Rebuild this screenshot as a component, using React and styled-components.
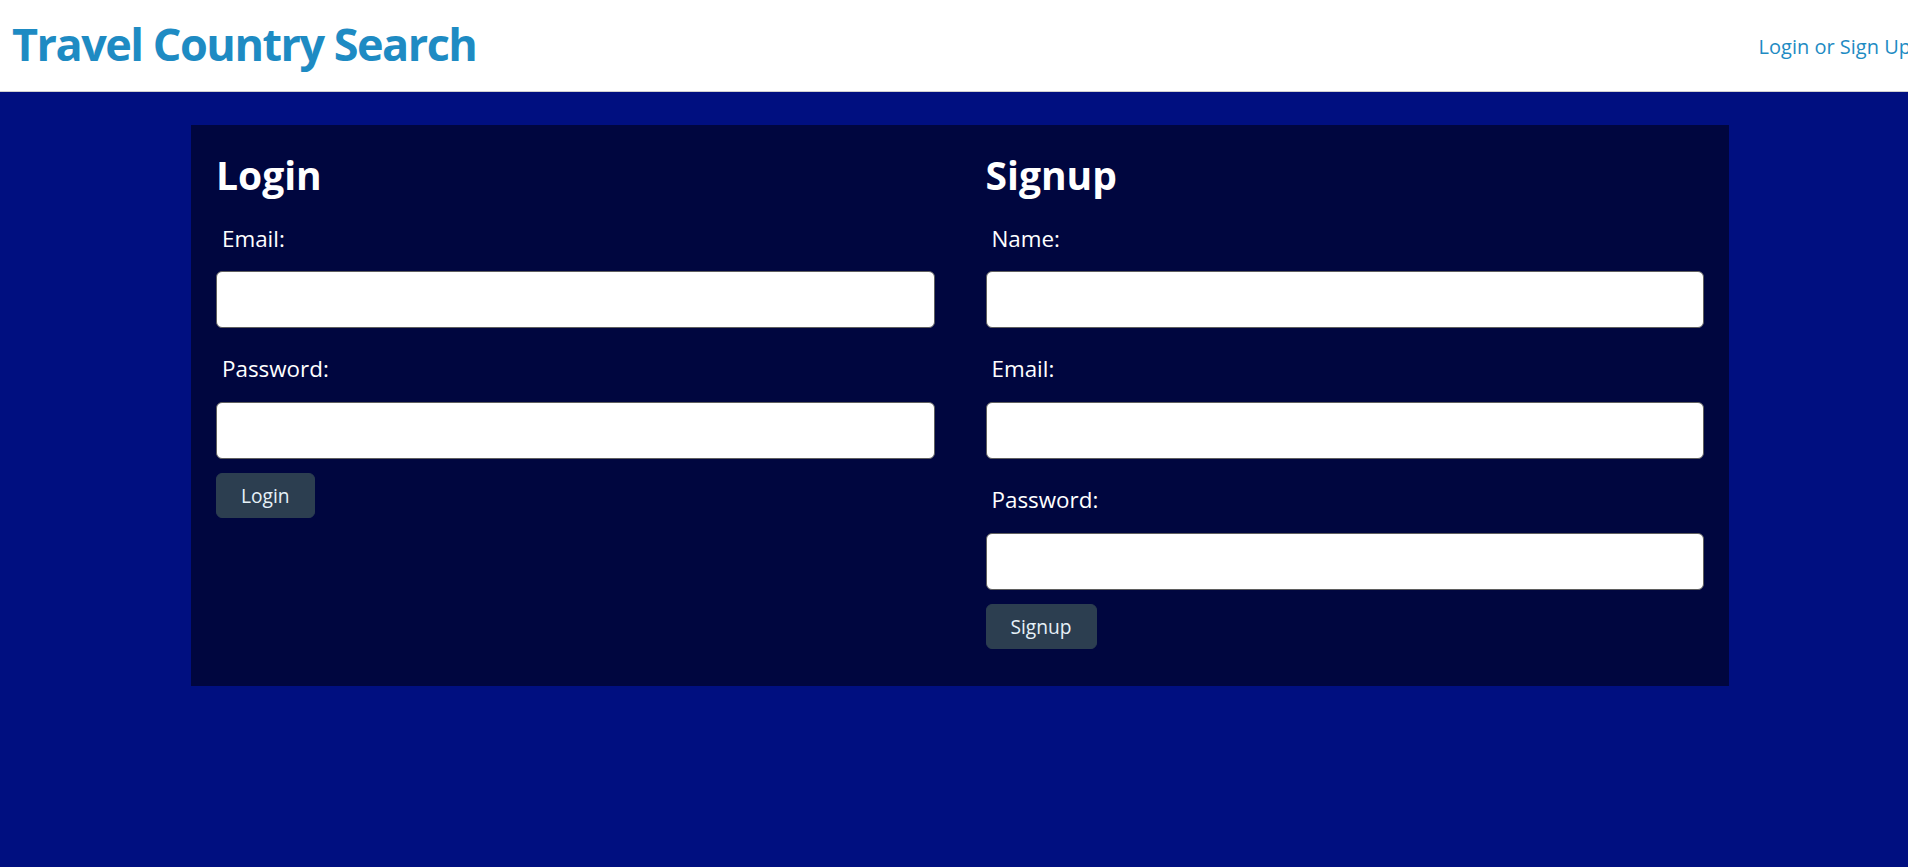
import React from "react";
import styled, { createGlobalStyle } from "styled-components";

const GlobalStyle = createGlobalStyle`
  html, body {
    margin: 0;
    padding: 0;
    background: #000f80;
    font-family: "Segoe UI", "Open Sans", "Noto Sans", sans-serif;
  }
  * { box-sizing: border-box; }
`;

const Page = styled.div`
  min-height: 867px;
  background: #000f80;
`;

const Header = styled.header`
  height: 92px;
  background: #ffffff;
  border-bottom: 1px solid #d0d0d0;
  display: flex;
  align-items: center;
  justify-content: space-between;
  padding-left: 12px;
  overflow: hidden;
`;

const Brand = styled.h1`
  margin: 0;
  font-size: 45px;
  font-weight: 700;
  color: #1e8bc3;
  letter-spacing: -1.5px;
  padding-bottom: 4px;
`;

const NavLink = styled.a`
  font-size: 20px;
  color: #1e8bc3;
  text-decoration: none;
  white-space: nowrap;
  margin-right: -3px;
  padding-top: 2px;
`;

const Main = styled.main`
  padding: 33px 179px 0 191px;
`;

const Card = styled.div`
  background: #00063f;
  display: grid;
  grid-template-columns: 1fr 1fr;
  column-gap: 51px;
  padding: 27px 25px 37px 25px;
`;

const Form = styled.form`
  display: flex;
  flex-direction: column;
`;

const Title = styled.h2`
  margin: 0 0 23px;
  font-size: 39px;
  font-weight: 700;
  color: #ffffff;
  line-height: 1.2;
`;

const Field = styled.div`
  display: flex;
  flex-direction: column;
  margin-bottom: ${(p) => (p.$last ? "14px" : "24px")};
`;

const Label = styled.label`
  color: #ffffff;
  font-size: 22.4px;
  line-height: 1.5;
  padding-left: 6px;
  margin-bottom: 16px;
`;

const Input = styled.input`
  height: 57px;
  width: 100%;
  border: 1px solid #5f5f5f;
  border-radius: 6px;
  background: #ffffff;
  font-size: 19px;
  padding: 0 14px;
`;

const Button = styled.button`
  align-self: flex-start;
  height: 45px;
  padding: 0 ${(p) => p.$pad}px;
  background: #2c3e50;
  color: #e6f1f8;
  border: 1px solid #2c3e50;
  border-radius: 6px;
  font-family: inherit;
  font-size: 19.2px;
  cursor: pointer;
`;

const loginFields = ["Email:", "Password:"];
const signupFields = ["Name:", "Email:", "Password:"];

export default function App() {
  return (
    <Page>
      <GlobalStyle />
      <Header>
        <Brand>Travel Country Search</Brand>
        <NavLink href="#">Login or Sign Up</NavLink>
      </Header>
      <Main>
        <Card>
          <Form onSubmit={(e) => e.preventDefault()}>
            <Title>Login</Title>
            {loginFields.map((f, i) => (
              <Field key={f} $last={i === loginFields.length - 1}>
                <Label>{f}</Label>
                <Input type={f === "Password:" ? "password" : "text"} />
              </Field>
            ))}
            <Button $pad={24}>Login</Button>
          </Form>
          <Form onSubmit={(e) => e.preventDefault()}>
            <Title>Signup</Title>
            {signupFields.map((f, i) => (
              <Field key={f} $last={i === signupFields.length - 1}>
                <Label>{f}</Label>
                <Input type={f === "Password:" ? "password" : "text"} />
              </Field>
            ))}
            <Button $pad={24}>Signup</Button>
          </Form>
        </Card>
      </Main>
    </Page>
  );
}
